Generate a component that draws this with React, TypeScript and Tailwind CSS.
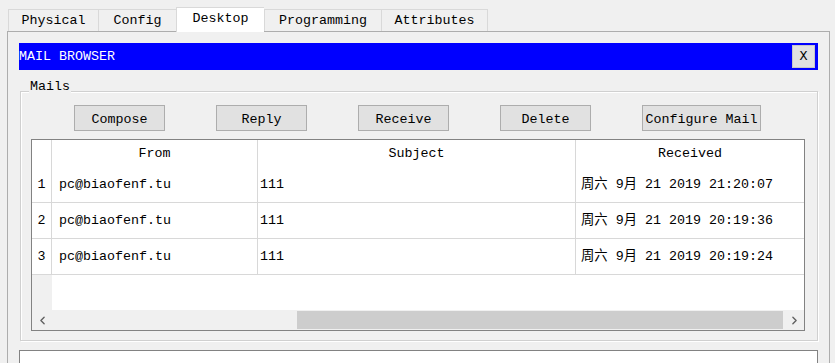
import { ChevronLeft, ChevronRight } from 'lucide-react';

const tabs = [
  { label: 'Physical', w: 'w-[90px]' },
  { label: 'Config', w: 'w-[78px]' },
  { label: 'Desktop', w: 'w-[88px]', active: true },
  { label: 'Programming', w: 'w-[117px]' },
  { label: 'Attributes', w: 'w-[107px]', last: true },
];

const mails = [
  { from: 'pc@biaofenf.tu', subject: '111', received: '周六 9月 21 2019 21:20:07' },
  { from: 'pc@biaofenf.tu', subject: '111', received: '周六 9月 21 2019 20:19:36' },
  { from: 'pc@biaofenf.tu', subject: '111', received: '周六 9月 21 2019 20:19:24' },
];

export default function App() {
  return (
    <div className="w-[835px] h-[363px] overflow-hidden bg-[#f0f0f0] text-black text-[13.33px] leading-none font-[family-name:'Liberation_Mono','Noto_Sans_CJK_SC',monospace]">
      {/* tab strip */}
      <div className="flex items-end h-[31px] pl-[8px]">
        {tabs.map((t) => (
          <div
            key={t.label}
            className={`${t.w} flex items-center justify-center border-l border-t border-[#d9d9d9] ${
              t.active ? 'h-[25px] bg-white relative z-10 -mb-px pb-[2px]' : 'h-[22px] bg-[#f0f0f0]'
            } ${t.last ? 'border-r' : ''}`}
          >
            {t.label}
          </div>
        ))}
      </div>

      {/* desktop panel */}
      <div className="ml-[7px] w-[823px] h-[340px] border border-[#adadad] pl-[11px] pt-[11px]">
        <div className="w-[799px] h-[27px] bg-[#0000ff] flex items-center justify-between">
          <span className="text-white pt-[1px]">MAIL BROWSER</span>
          <button className="mr-[3px] w-[23px] h-[23px] bg-[#e1e1e1] border border-[#c8c8c8] flex items-center justify-center pt-[1px]">
            X
          </button>
        </div>

        {/* Mails group */}
        <div className="relative mt-[21px] ml-[1px] w-[798px] h-[250px] border border-[#d0d0d0] shadow-[inset_1px_1px_0_#ffffff,1px_1px_0_#ffffff] pt-[13px]">
          <span className="absolute -top-[12px] left-[8px] px-[1px] bg-[#f0f0f0] leading-[14px]">Mails</span>

          <div className="flex gap-[51px] ml-[53px]">
            {['Compose', 'Reply', 'Receive', 'Delete'].map((b) => (
              <button key={b} className="w-[91px] h-[26px] bg-[#e1e1e1] border border-[#adadad] flex items-center justify-center pt-[3px]">
                {b}
              </button>
            ))}
            <button className="w-[119px] h-[26px] bg-[#e1e1e1] border border-[#adadad] flex items-center justify-center pt-[3px]">
              Configure Mail
            </button>
          </div>

          {/* table */}
          <div className="mt-[8px] ml-[10px] w-[774px] h-[192px] border border-[#828282] bg-white flex flex-col overflow-hidden">
            <div className="flex h-[27px] shrink-0">
              <div className="w-[20px] border-r border-[#d8d8d8]" />
              <div className="w-[206px] border-r border-[#d8d8d8] flex items-center justify-center pt-[1px]">From</div>
              <div className="w-[318px] border-r border-[#d8d8d8] flex items-center justify-center pt-[1px]">Subject</div>
              <div className="w-[228px] flex items-center justify-center pt-[1px]">Received</div>
            </div>
            {mails.map((m, i) => (
              <div key={i} className="flex h-[36px] shrink-0 border-b border-[#d8d8d8]">
                <div className="w-[20px] border-r border-[#d8d8d8] flex items-center justify-center">{i + 1}</div>
                <div className="w-[206px] border-r border-[#d8d8d8] flex items-center pl-[7px]">{m.from}</div>
                <div className="w-[318px] border-r border-[#d8d8d8] flex items-center pl-[2px]">{m.subject}</div>
                <div className="w-[228px] flex items-center pl-[5px] whitespace-nowrap overflow-hidden">{m.received}</div>
              </div>
            ))}
            <div className="flex flex-1">
              <div className="w-[20px] bg-[#f0f0f0]" />
              <div className="flex-1" />
            </div>
            {/* horizontal scrollbar */}
            <div className="h-[20px] shrink-0 bg-[#f0f0f0] flex items-center">
              <div className="w-[20px] flex items-center justify-center">
                <ChevronLeft size={13} strokeWidth={2.5} color="#606060" />
              </div>
              <div className="flex-1 h-full flex items-center">
                <div className="ml-[245px] w-[486px] h-[18px] bg-[#cdcdcd]" />
              </div>
              <div className="w-[20px] flex items-center justify-center">
                <ChevronRight size={13} strokeWidth={2.5} color="#606060" />
              </div>
            </div>
          </div>
        </div>

        <div className="mt-[9px] w-[799px] h-[40px] border border-[#828282] bg-white" />
      </div>
    </div>
  );
}
